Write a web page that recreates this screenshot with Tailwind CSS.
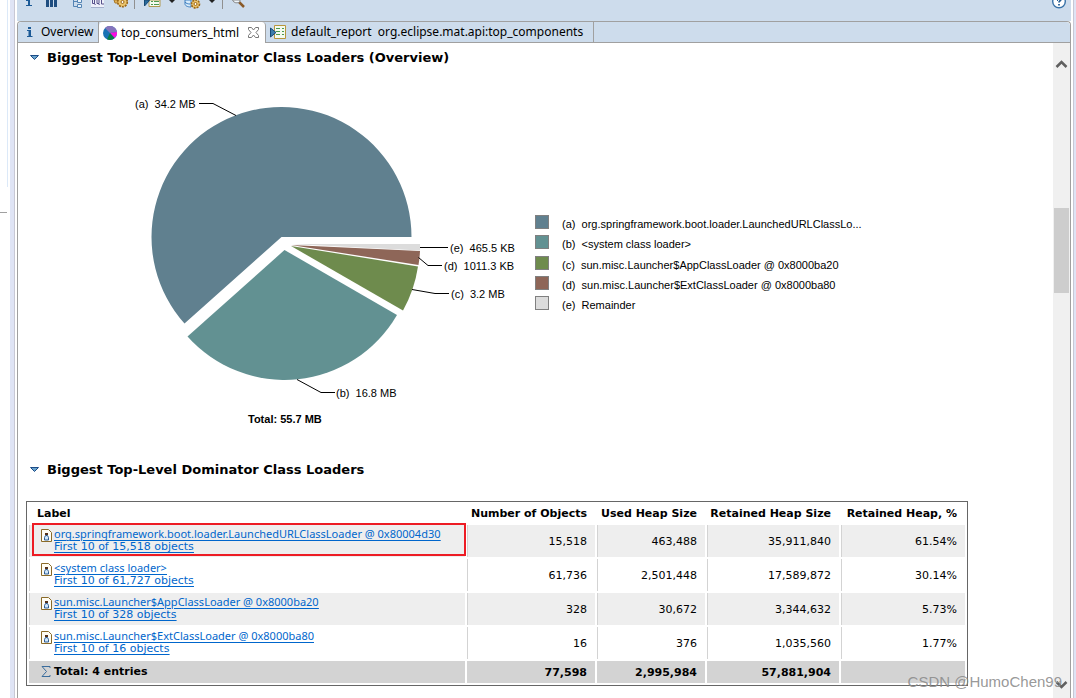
<!DOCTYPE html>
<html lang="en">
<head>
<meta charset="utf-8">
<title>Memory Analyzer - top_consumers_html</title>
<script src="https://cdn.jsdelivr.net/npm/@tailwindcss/browser@4"></script>
</head>
<body class="relative h-screen overflow-hidden flex bg-white text-black font-['DejaVu_Sans',sans-serif] text-[11px]">

<!-- neighbouring pane and sash -->
<div class="w-[7px] shrink-0 flex flex-col">
  <div class="h-[212px] bg-white"></div>
  <div class="h-px bg-[#a0a0a0]"></div>
</div>
<div class="w-[3px] shrink-0"><div class="h-[187px] w-px bg-[#dce9f8]"></div></div>
<div class="w-[5px] shrink-0 bg-[#dfe4f5] border-r border-[#c8c8d4]"></div>

<main class="flex-1 min-w-0 flex flex-col">
  <!-- toolbar -->
  <div class="h-[21px] shrink-0 bg-[#cddcec] flex items-start pl-2 pr-1 ml-0.5" role="toolbar">
    <button aria-label="Overview" class="w-[21px]"><svg width="10" height="10"><path d="M1 0h4v5h2v1H1V5h2V1H1z" fill="#1c5a96"/></svg></button>
    <button aria-label="Histogram" class="w-[26px]"><svg width="12" height="10"><path d="M0 0h3v7H0zM4 0h3v7H4zM8 0h3v7H8z" fill="#1f4e80"/></svg></button>
    <button aria-label="Dominator tree" class="w-[19px]"><svg width="12" height="10" fill="none" stroke="#5484b4"><path d="M1.500 0v6.500H5M1.500 1.500H5"/><path d="M5.500 -.5h4v3h-4zM5.500 4.500h4v3h-4z" fill="#e8f2fa"/></svg></button>
    <button aria-label="OQL" class="w-[22px]"><svg width="14" height="10"><path d="M0 0h13v7.500H0z" fill="#eef0fa"/><path d="M1.500 0v3.500h2V0M3 3l1.500 2M6 0v3.500h2V0M7 3l1.500 2M10.500 0v4H13" fill="none" stroke="#56508a"/><path d="M0 7.500h13" stroke="#a4b0cc"/></svg></button>
    <button aria-label="Thread overview" class="w-[21px]"><svg width="16" height="10"><path d="M1 0h4l2 3H2z" fill="#e2b45c" stroke="#a87828"/><circle cx="9.500" cy="2" r="4.800" fill="#ecc56c" stroke="#9a6618" stroke-width="1.600" stroke-dasharray="2 1"/><circle cx="9.500" cy="2" r="1.500" fill="#fff" stroke="#9a6618"/></svg></button>
    <span class="w-px h-[9px] bg-[#909090] mr-[9px]"></span>
    <button aria-label="Run report" class="w-[25px]"><svg width="18" height="10"><path d="M5 0h11v6.500H5z" fill="#f4faf0" stroke="#b09850"/><path d="M7 1.500h2M10 1.500h5M7 4.500h2M10 4.500h5" stroke="#4c9a50"/><path d="M.5 0v6l5-5.500z" fill="#286a9c" stroke="#174a74"/></svg></button>
    <button aria-label="Report menu" class="w-[15px]"><svg width="7" height="10"><path d="M0 0h6L3 3z" fill="#222"/></svg></button>
    <button aria-label="Query browser" class="w-[25px]"><svg width="18" height="10"><path d="M1 0v4c0 1.500 2 3 6 3V0z" fill="#d6eafa" stroke="#3c7ec0"/><path d="M1 2c1 1.500 3 2 5 2" fill="none" stroke="#3c7ec0"/><circle cx="11.500" cy="4" r="4" fill="#ecc56c" stroke="#9a6618" stroke-width="1.600" stroke-dasharray="2 1"/><circle cx="11.500" cy="4" r="1.500" fill="#fff" stroke="#9a6618"/></svg></button>
    <button aria-label="Query menu" class="w-[13px]"><svg width="7" height="10"><path d="M0 0h6L3 3z" fill="#222"/></svg></button>
    <span class="w-px h-[9px] bg-[#909090] mr-[8px]"></span>
    <button aria-label="Find"><svg width="16" height="10"><path d="M8 2l5 5" stroke="#8a5a28" stroke-width="2.500"/><path d="M1.500 0a4.500 4.500 0 0 0 7.500 1.500V0z" fill="#eef6fc" stroke="#888"/></svg></button>
    <button aria-label="Help" class="ml-auto"><svg width="16" height="10"><circle cx="8" cy="1.500" r="6.300" fill="#fff" stroke="#3a73a8" stroke-width="1.400"/><path d="M6 0h1M10 -1c0 2-2 1.500-2 3.500M8 4v1.600" fill="none" stroke="#245c92" stroke-width="1.800"/></svg></button>
  </div>

  <div class="flex-1 min-h-0 flex flex-col ml-0.5 border border-b-0 border-[#a0a0a0] rounded-t">
    <!-- editor tabs -->
    <div role="tablist" class="h-[21px] shrink-0 flex bg-[#cddcec] rounded-t font-['Noto_Sans',sans-serif] text-[12px] leading-5 whitespace-nowrap">
      <button role="tab" class="w-[81px] border-b border-r border-[#a0a0a0] flex items-center pl-2"><svg width="15" height="14" class="shrink-0"><path d="M2 2h3v2H2zM1 5h4v6h1.500v1H1v-1h1.500V6H1z" fill="#1c5a96"/></svg>Overview</button>
      <div class="w-[167px] bg-white border-r border-[#a0a0a0] flex items-center pl-1 rounded-t-sm">
        <svg width="14" height="14" class="mr-1 shrink-0"><circle cx="7" cy="7" r="7" fill="#1872b4"/><path d="M7 7L2 2A7 7 0 0 1 14 6z" fill="#8474bc"/><path d="M7 7L14 6A7 7 0 0 1 11.500 12z" fill="#fc0ce0"/><path d="M7 7L11.500 12A7 7 0 0 1 4 13.300z" fill="#087c48"/></svg>
        <button role="tab" aria-selected="true">top_consumers_html</button>
        <button aria-label="Close tab" class="ml-auto mr-1.5"><svg width="11" height="11" fill="#fff" stroke="#777"><path d="M.5 .5h3L5.500 3l2-2.500h3v2L8 5.500l2.500 3v2h-3l-2-2.500-2 2.500h-3v-2L3 5.500l-2.500-3z"/></svg></button>
      </div>
      <button role="tab" class="w-[328px] border-b border-r border-[#a0a0a0] flex items-center pl-1"><svg width="17" height="16" class="mr-1 shrink-0"><path d="M4.500 1.500h11v13h-11z" fill="#f4faf0" stroke="#b8963c"/><path d="M6 4.500h4M12 4.500h2M6 7.500h4M12 7.500h2M6 10.500h4M12 10.500h2" stroke="#4c9a50"/><path d="M.5 4v9L6 8.500z" fill="#3c7cac" stroke="#174a74"/></svg><span class="whitespace-pre">default_report  org.eclipse.mat.api:top_components</span></button>
      <div class="flex-1 border-b border-[#a0a0a0]"></div>
    </div>

    <div class="flex-1 min-h-0 flex">
      <!-- report -->
      <div class="flex-1 min-w-0 overflow-hidden pl-2 pr-[85px] pt-1.5">
        <h2 class="flex items-center h-[18px] pl-1 font-bold text-[13px] whitespace-nowrap"><svg width="17" height="8" class="shrink-0"><path d="M.5 1.500h8l-4 4z" fill="#6aa4cc" stroke="#1c4c88"/></svg>Biggest Top-Level Dominator Class Loaders (Overview)</h2>

        <section class="flex items-start h-[394px] pt-4" aria-label="Class loader pie chart">
          <svg width="500" height="350" viewBox="26 83 500 350" class="shrink-0 font-['Liberation_Sans',sans-serif] text-[11px]">
            <path d="M281.500 237H411.500A130 130 0 1 0 184.500 323.500z" fill="#60808f"/>
            <path d="M284.500 250L397 315A130 130 0 0 1 187.500 336.500z" fill="#629192"/>
            <path d="M291 246L418 266.500A130 130 0 0 1 403 310.500z" fill="#6e8b4d"/>
            <path d="M291 245L420 251A130 130 0 0 1 418.500 265z" fill="#8e6658"/>
            <path d="M291 244L420 244V250.500z" fill="#dcdcdc"/>
            <g fill="none" stroke="#000">
              <path d="M199 103.500h14L236 115.500M420 247.500h28M418.500 257.500L428 265.500h14M412 289.500L435 293.500h14M297 379.500L321 392.500h14"/>
            </g>
            <g>
              <text x="135" y="108">(a)&nbsp; 34.2 MB</text>
              <text x="450" y="252">(e)&nbsp; 465.5 KB</text>
              <text x="444" y="270">(d)&nbsp; 1011.3 KB</text>
              <text x="451" y="298">(c)&nbsp; 3.2 MB</text>
              <text x="336" y="397">(b)&nbsp; 16.8 MB</text>
              <text x="248" y="423" font-weight="bold">Total: 55.7 MB</text>
            </g>
          </svg>
          <ul class="mt-[129px] ml-[9px] font-['Liberation_Sans',sans-serif] whitespace-nowrap leading-4">
            <li class="flex h-5 items-center gap-[13px]"><span class="size-3.5 bg-[#60808f] border border-[#808080]"></span><span class="pt-1">(a)&nbsp; org.springframework.boot.loader.LaunchedURLClassLo...</span></li>
            <li class="flex h-5 items-center gap-[13px]"><span class="size-3.5 bg-[#629192] border border-[#808080]"></span><span class="pt-1">(b)&nbsp; &lt;system class loader&gt;</span></li>
            <li class="flex h-[21px] items-center gap-[13px]"><span class="size-3.5 bg-[#6e8b4d] border border-[#808080]"></span><span class="pt-1">(c)&nbsp; sun.misc.Launcher$AppClassLoader @ 0x8000ba20</span></li>
            <li class="flex h-5 items-center gap-[13px]"><span class="size-3.5 bg-[#8e6658] border border-[#808080]"></span><span class="pt-1">(d)&nbsp; sun.misc.Launcher$ExtClassLoader @ 0x8000ba80</span></li>
            <li class="flex h-5 items-center gap-[13px]"><span class="size-3.5 bg-[#dcdcdc] border border-[#808080]"></span><span class="pt-1">(e)&nbsp; Remainder</span></li>
          </ul>
        </section>

        <h2 class="flex items-center h-[18px] pl-1 font-bold text-[13px] whitespace-nowrap"><svg width="17" height="8" class="shrink-0"><path d="M.5 1.500h8l-4 4z" fill="#6aa4cc" stroke="#1c4c88"/></svg>Biggest Top-Level Dominator Class Loaders</h2>

        <table class="mt-[22px] w-full table-fixed border-separate border-spacing-0.5 border border-[#666] text-right leading-[13px] whitespace-nowrap">
          <colgroup><col><col class="w-[128px]"><col class="w-[108px]"><col class="w-[132px]"><col class="w-[124px]"></colgroup>
          <thead>
            <tr class="h-[19px]"><th class="text-left pl-2">Label</th><th class="pr-2">Number of Objects</th><th class="pr-2">Used Heap Size</th><th class="pr-2">Retained Heap Size</th><th class="pr-2">Retained Heap, %</th></tr>
          </thead>
          <tbody>
            <tr class="h-8 bg-[#eee]">
              <td class="relative text-left border-l border-[#d3d3d3] p-0 pl-[11px]"><div class="absolute left-0.5 -right-px -top-0.5 bottom-px border-2 border-[#ed1c24]"></div>
                <div class="relative flex pb-0.5 gap-0.5"><svg width="11" height="14" class="mt-0.5 shrink-0"><path d="M.5 .5h7l3 3v9H.5z" fill="#fffdf4" stroke="#8a6a28"/><path d="M4.500 6.500L3.500 8.500v2.500h4V8.500L6.500 6.500z" fill="#cfe6fa" stroke="#2c5c94"/><path d="M4 4h3v2H4z" fill="#553018"/></svg><span class="flex flex-col items-start text-[#0066cc] underline underline-offset-2"><a href="#o1" class="font-['Noto_Sans',sans-serif]">org.springframework.boot.loader.LaunchedURLClassLoader @ 0x80004d30</a><a href="#f1">First 10 of 15,518 objects</a></span></div></td>
              <td class="border-l border-[#d3d3d3] pr-2">15,518</td><td class="border-l border-[#d3d3d3] pr-2">463,488</td><td class="border-l border-[#d3d3d3] pr-2">35,911,840</td><td class="border-l border-[#d3d3d3] pr-2">61.54%</td>
            </tr>
            <tr class="h-8">
              <td class="text-left border-l border-[#d3d3d3] p-0 pl-[11px]"><div class="flex pb-0.5 gap-0.5"><svg width="11" height="14" class="mt-0.5 shrink-0"><path d="M.5 .5h7l3 3v9H.5z" fill="#fffdf4" stroke="#8a6a28"/><path d="M4.500 6.500L3.500 8.500v2.500h4V8.500L6.500 6.500z" fill="#cfe6fa" stroke="#2c5c94"/><path d="M4 4h3v2H4z" fill="#553018"/></svg><span class="flex flex-col items-start text-[#0066cc] underline underline-offset-2"><a href="#o2" class="font-['Noto_Sans',sans-serif]">&lt;system class loader&gt;</a><a href="#f2">First 10 of 61,727 objects</a></span></div></td>
              <td class="border-l border-[#d3d3d3] pr-2">61,736</td><td class="border-l border-[#d3d3d3] pr-2">2,501,448</td><td class="border-l border-[#d3d3d3] pr-2">17,589,872</td><td class="border-l border-[#d3d3d3] pr-2">30.14%</td>
            </tr>
            <tr class="h-8 bg-[#eee]">
              <td class="text-left border-l border-[#d3d3d3] p-0 pl-[11px]"><div class="flex pb-0.5 gap-0.5"><svg width="11" height="14" class="mt-0.5 shrink-0"><path d="M.5 .5h7l3 3v9H.5z" fill="#fffdf4" stroke="#8a6a28"/><path d="M4.500 6.500L3.500 8.500v2.500h4V8.500L6.500 6.500z" fill="#cfe6fa" stroke="#2c5c94"/><path d="M4 4h3v2H4z" fill="#553018"/></svg><span class="flex flex-col items-start text-[#0066cc] underline underline-offset-2"><a href="#o3" class="font-['Noto_Sans',sans-serif]">sun.misc.Launcher$AppClassLoader @ 0x8000ba20</a><a href="#f3">First 10 of 328 objects</a></span></div></td>
              <td class="border-l border-[#d3d3d3] pr-2">328</td><td class="border-l border-[#d3d3d3] pr-2">30,672</td><td class="border-l border-[#d3d3d3] pr-2">3,344,632</td><td class="border-l border-[#d3d3d3] pr-2">5.73%</td>
            </tr>
            <tr class="h-8">
              <td class="text-left border-l border-[#d3d3d3] p-0 pl-[11px]"><div class="flex pb-0.5 gap-0.5"><svg width="11" height="14" class="mt-0.5 shrink-0"><path d="M.5 .5h7l3 3v9H.5z" fill="#fffdf4" stroke="#8a6a28"/><path d="M4.500 6.500L3.500 8.500v2.500h4V8.500L6.500 6.500z" fill="#cfe6fa" stroke="#2c5c94"/><path d="M4 4h3v2H4z" fill="#553018"/></svg><span class="flex flex-col items-start text-[#0066cc] underline underline-offset-2"><a href="#o4" class="font-['Noto_Sans',sans-serif]">sun.misc.Launcher$ExtClassLoader @ 0x8000ba80</a><a href="#f4">First 10 of 16 objects</a></span></div></td>
              <td class="border-l border-[#d3d3d3] pr-2">16</td><td class="border-l border-[#d3d3d3] pr-2">376</td><td class="border-l border-[#d3d3d3] pr-2">1,035,560</td><td class="border-l border-[#d3d3d3] pr-2">1.77%</td>
            </tr>
          </tbody>
          <tfoot>
            <tr class="h-[22px] bg-[#d3d3d3] font-bold">
              <td class="text-left p-0 pl-3 pb-0.5"><div class="flex items-center gap-0.5"><svg width="11" height="13"><path d="M9 3V1.500H1L5.500 6.500 1 11.500H9V10" fill="none" stroke="#3a6c9c"/></svg>Total: 4 entries</div></td>
              <td class="pr-2">77,598</td><td class="pr-2">2,995,984</td><td class="pr-2">57,881,904</td><td></td>
            </tr>
          </tfoot>
        </table>
      </div>

      <!-- vertical scrollbar -->
      <div class="w-[17px] shrink-0 bg-[#f0f0f0] flex flex-col items-center justify-between pt-4 pb-2">
        <svg width="13" height="10" fill="none" stroke="#606060" stroke-width="2.500"><path d="M1.500 8L6.500 3l5 5"/></svg>
        <div class="w-[15px] h-[85px] bg-[#cdcdcd] mt-[139px] mb-auto"></div>
        <svg width="13" height="10" fill="none" stroke="#606060" stroke-width="2.500"><path d="M1.500 2l5 5 5-5"/></svg>
      </div>
    </div>
  </div>
</main>
<div class="w-[5px] shrink-0 pl-0.5"><div class="h-full bg-[#dfe4f5] border-l border-[#c8c8d4]"></div></div>

<div class="absolute right-3.5 bottom-1.5 font-['Liberation_Sans',sans-serif] text-[15px] leading-5 text-[#8c8c8c]/90">CSDN @HumoChen99</div>
</body>
</html>
